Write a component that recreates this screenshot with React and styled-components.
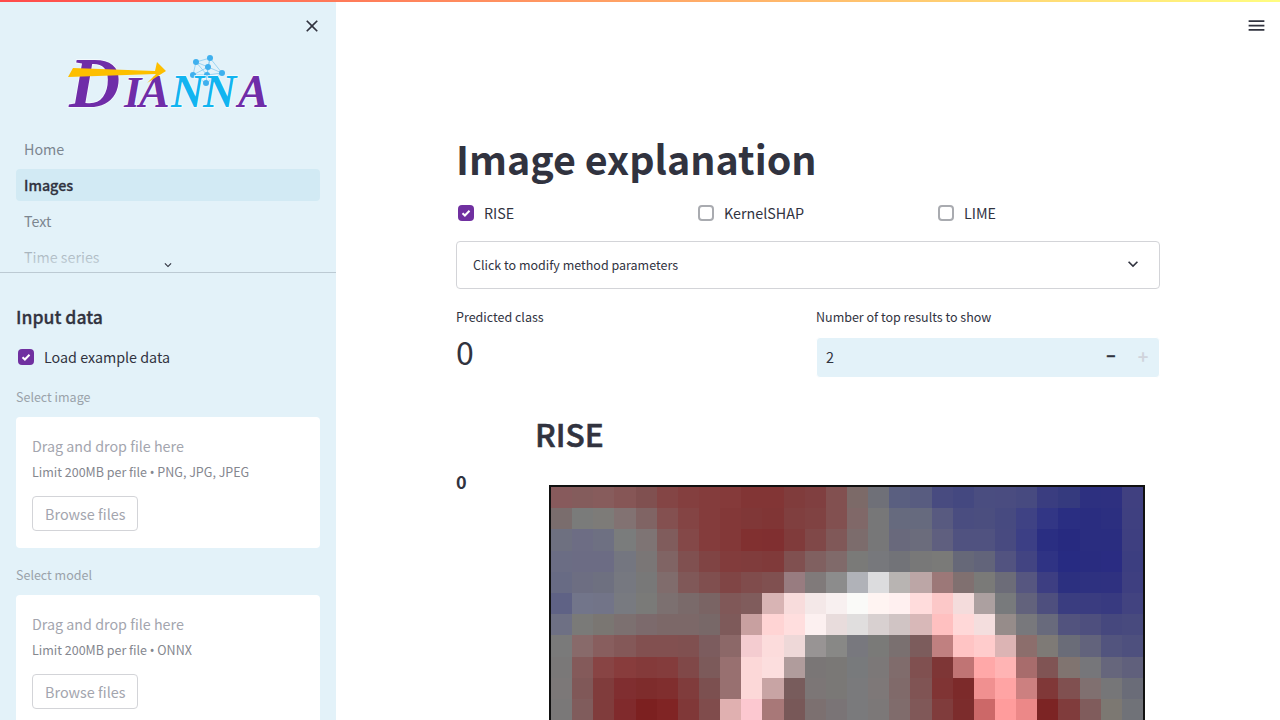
import styled, { createGlobalStyle } from "styled-components";

const heatmap = [
  "875a5c 845c5c 875c5c 865656 805050 844545 843f3f 843c3c 853a3a 823535 823535 803c3c 803f40 825050 7c6a68 6f7078 5a5f80 585c80 484b80 444880 4a4d80 4a4c80 474a80 3a3d80 353a7e 2d3080 2e3080 404080",
  "7a6d6d 7a7b7a 7d7b78 827272 806464 845050 844444 843c3c 833838 803737 803535 803f3f 804242 825050 806868 777778 666a7e 666a7e 585a80 4a4d80 4b4e7f 474a80 3f4284 323685 2a2e82 2a2d80 2c2f80 3f4080",
  "6e7080 6d6d84 6e7082 7a7c7c 7e7474 805c5c 844848 843c3c 833838 813030 802f30 803b3b 804848 805858 7c6c6c 777778 69697c 6b6c7c 5f5f7f 505280 505280 484a80 3c3f85 2a2e82 272a80 2a2d80 2a2d80 3e3f80",
  "6b6d84 6c6c84 6c6c84 747680 7a7676 806464 805050 804444 823c3c 803c3c 803a3a 805050 806060 806a6a 7a7a78 77787c 727378 787878 7a7a78 666878 62647a 525380 424482 2f3384 272b82 292c80 2a2c82 3c3e80",
  "686b84 6d6e82 6e7080 767880 787878 806c6c 805858 804f4f 804545 804c4c 805050 987c80 807a7a 8c8c8c b0b2b8 dcdcde b8b4b2 bca6a6 9c7878 807070 7a7a78 6c6c78 565680 3d3e82 2c3080 2e3180 2f3180 3e3f80",
  "5f6285 72758a 727488 787a80 7a7a78 7c7070 7a6a6a 7a6464 805858 805c5c d8b4b4 f8dcdc f4e8e8 f8f0f0 fafaf8 fff4f2 fff0f0 ffdcdc fcc8c8 f4dcdc aca0a0 787a7c 62627c 4e4f7e 3a3d80 3a3c80 383a80 424380",
  "6e7084 7a7a78 7a7672 7c7070 7c6a6c 7c6868 7c6868 786868 7e5a5a c8a0a0 ffd4d4 ffdede fcf0f0 e8dcdc e0dede d8d0d0 d0c4c4 d8b8b8 ffc0c0 ffd8d8 f4dede 968c8a 78787c 686a7c 52537e 4e4f7e 46487e 484a7e",
  "7a7a7a 886a6a 885e5e 845858 825050 825050 805050 7c5c5e 8c6868 f4ccd0 fcdcdc eed8d8 989494 888886 78787e 7a7a78 7a7070 7c5c5c c08080 ffc4c4 ffcccc dcb4b4 8c6e6c 7e7a76 6a6c78 62637c 52547e 4e507e",
  "7a7878 845a5a 884444 883c3c 843a3a 843c3c 804848 7c5a5a 987070 fcd8d8 fcdede b09c9c 7a7676 7a7876 787a7c 7c7878 806c6c 805050 7e3636 c07474 ffa8a8 ffb4b4 a86c6c 805454 807470 76767a 66667c 60607c",
  "7c7878 805858 803c3c 802e30 7e2c2c 802e2e 803c3c 7c5050 987070 fcd8d8 c8a4a4 785c5c 7c7676 7a7876 7a7a7c 7e7878 806a6a 805454 803434 7c2a2a f09090 ffa4a4 cc8080 803838 805050 807070 767678 6a6c78",
  "7a7878 805c5c 803c3c 802a2c 7c2020 802424 803838 804c4c e0b0b0 fcc8d0 a87878 785858 7c7070 7a7476 7a7a7c 7c7878 806c6c 805858 803c3c 7c2c2c cc6868 ff9c9c ec8888 7c2424 803c3c 805c5c 7c7872 707278",
].map(row => row.split(" "));

const GlobalStyle = createGlobalStyle`
  html, body {
    margin: 0;
    height: 100%;
    overflow: hidden;
    background: #fff;
  }
  body {
    font-family: "Noto Sans CJK SC", "Noto Sans", sans-serif;
    color: #31333f;
  }
  * {
    box-sizing: border-box;
  }
`;

const Page = styled.div`
  display: flex;
  flex-direction: column;
  width: 1280px;
  height: 720px;
  overflow: hidden;
`;

const Decoration = styled.div`
  flex: none;
  height: 2px;
  background: linear-gradient(90deg, #ff4b4b, #fffd80);
`;

const Columns = styled.div`
  flex: 1;
  display: flex;
  min-height: 0;
`;

const Sidebar = styled.aside`
  flex: none;
  width: 336px;
  overflow: hidden;
  background: #e3f2f9;
`;

const SidebarTop = styled.div`
  display: flex;
  justify-content: flex-end;
  height: 48px;
  padding: 14px 14px 0 0;
`;

const IconBox = styled.svg`
  display: block;
  width: ${props => props.$size || 24}px;
  height: ${props => props.$size || 24}px;
  fill: ${props => props.$color || "#31333f"};
`;

const LogoWrap = styled.div`
  height: 83px;
  padding-left: 66px;
`;

const Nav = styled.nav`
  position: relative;
  height: 140px;
  padding: 0 16px;
  border-bottom: 1px solid #bccad3;
  overflow: hidden;
`;

const NavItem = styled.div`
  height: 32px;
  margin: 0 0 4px;
  padding: 0 8px;
  border-radius: 4px;
  font-size: 14.3px;
  line-height: 32px;
  font-weight: ${props => (props.$active ? 500 : 400)};
  -webkit-text-stroke: ${props => (props.$active ? "0.3px #31333f" : "0")};
  color: ${props => (props.$active ? "#31333f" : "#7c8690")};
  background: ${props => (props.$active ? "#d2eaf4" : "transparent")};
`;

const NavFade = styled.div`
  position: absolute;
  left: 0;
  right: 0;
  bottom: 0;
  height: 40px;
  background: linear-gradient(180deg, rgba(227, 242, 249, 0), rgba(227, 242, 249, 0.85));
`;

const NavChevron = styled.div`
  position: absolute;
  left: 161px;
  bottom: 0;
`;

const SidebarBody = styled.div`
  padding: 31px 16px 0;
`;

const SideHeading = styled.h2`
  margin: 0 0 14px;
  font-size: 17.6px;
  line-height: 26px;
  font-weight: 500;
  -webkit-text-stroke: 0.3px #31333f;
  color: #31333f;
`;

const CheckRow = styled.label`
  display: flex;
  align-items: center;
  gap: 10px;
  height: 24px;
  font-size: 14.3px;
  color: #31333f;
`;

const CheckBoxMark = styled.span`
  flex: none;
  display: flex;
  align-items: center;
  justify-content: center;
  width: 16px;
  height: 16px;
  margin: 2px 0 0 2px;
  border-radius: 4px;
  background: ${props => (props.$checked ? "#7030a0" : "#fff")};
  border: ${props => (props.$checked ? "none" : "2px solid #a9abb0")};
`;

const FieldLabel = styled.div`
  margin: ${props => props.$top || 0}px 0 0;
  height: 20px;
  font-size: 12.5px;
  line-height: 20px;
  color: ${props => (props.$muted ? "#9aa2aa" : "#31333f")};
`;

const UploadCard = styled.div`
  height: 131px;
  margin-top: 10px;
  padding: 16px;
  border-radius: 4px;
  background: #fff;
`;

const UploadTitle = styled.div`
  font-size: 14.3px;
  line-height: 26px;
  color: #a3a5ae;
`;

const UploadHint = styled.div`
  margin-top: 2px;
  font-size: 12.5px;
  line-height: 22px;
  color: #85878f;
`;

const Bullet = styled.span`
  font-family: "Noto Sans", sans-serif;
`;

const BrowseButton = styled.button`
  display: block;
  height: 35px;
  margin-top: 12px;
  padding: 0 12px;
  border: 1px solid #d3d4d8;
  border-radius: 4px;
  background: #fff;
  font-family: inherit;
  font-size: 14.4px;
  color: #a3a5ae;
`;

const Main = styled.main`
  position: relative;
  flex: 1;
  min-width: 0;
  overflow: hidden;
  padding: 130px 120px 0;
`;

const MenuButton = styled.div`
  position: absolute;
  top: 12.5px;
  right: 13.5px;
`;

const Title = styled.h1`
  margin: 0;
  height: 52px;
  font-size: 39.4px;
  line-height: 52px;
  font-weight: 700;
  color: #31333f;
`;

const MethodRow = styled.div`
  display: grid;
  grid-template-columns: repeat(3, 240px);
  margin-top: 16px;
`;

const Expander = styled.div`
  display: flex;
  align-items: center;
  justify-content: space-between;
  height: 48px;
  margin-top: 17px;
  padding: 0 16px 2px 16px;
  border: 1px solid #d3d4d8;
  border-radius: 4px;
  font-size: 12.5px;
  color: #31333f;
`;

const MetricRow = styled.div`
  display: grid;
  grid-template-columns: 344px 344px;
  gap: 16px;
  margin-top: 18px;
`;

const MetricValue = styled.div`
  font-size: 32px;
  line-height: 48px;
  color: #31333f;
`;

const NumberInput = styled.div`
  display: flex;
  align-items: center;
  height: 41px;
  margin-top: 10px;
  padding: 0 0 3px 9px;
  border: 1px solid #fff;
  border-radius: 4px;
  background: #e3f2f9;
  font-size: 14.4px;
  color: #31333f;
`;

const NumberValue = styled.span`
  flex: 1;
`;

const StepButton = styled.span`
  width: 32px;
  text-align: center;
  font-size: ${props => (props.$disabled ? 18 : 15)}px;
  line-height: 20px;
  font-weight: 700;
  -webkit-text-stroke: ${props => (props.$disabled ? "0" : "0.5px #31333f")};
  color: ${props => (props.$disabled ? "#d0d4dc" : "#31333f")};
`;

const ResultGrid = styled.div`
  display: grid;
  grid-template-columns: 79px 1fr;
  margin-top: 32px;
`;

const ResultHeading = styled.h2`
  grid-column: 2;
  margin: 0;
  height: 46px;
  font-size: 31.6px;
  line-height: 46px;
  font-weight: 500;
  -webkit-text-stroke: 0.6px #31333f;
  color: #31333f;
`;

const ClassLabel = styled.div`
  padding-top: 11px;
  font-size: 18px;
  line-height: 28px;
  font-weight: 600;
`;

const HeatFrame = styled.div`
  width: 596px;
  height: 300px;
  margin: 29px 0 0 14px;
  border: 2px solid #111;
  overflow: hidden;
`;

const HeatSvg = styled.svg`
  display: block;
  width: 592px;
  height: 233px;
  shape-rendering: crispEdges;
`;

function Logo() {
  const nodes = [[130, 12], [144, 8], [142, 17], [127, 25], [141, 25], [156, 23], [140, 33]];
  const links = [[0, 1], [0, 2], [1, 2], [1, 5], [2, 5], [0, 3], [0, 4], [3, 4], [4, 5], [2, 3], [2, 4], [3, 6], [4, 6], [1, 4], [5, 6]];
  return (
    <svg width="230" height="80" viewBox="0 0 230 80">
      {links.map(([a, b]) => (
        <line
          key={`${a}-${b}`}
          x1={nodes[a][0]}
          y1={nodes[a][1]}
          x2={nodes[b][0]}
          y2={nodes[b][1]}
          stroke="#7cc6ee"
          strokeWidth="0.7"
        />
      ))}
      {nodes.map(([cx, cy]) => (
        <circle key={`${cx}-${cy}`} cx={cx} cy={cy} r="3" fill="#3fb0ee" />
      ))}
      <g
        fontFamily="'Liberation Serif', serif"
        fontStyle="italic"
        fontWeight="700"
        stroke="#f6fcff"
        strokeWidth="1.5"
        paintOrder="stroke"
      >
        <text x="3" y="57" fontSize="71" fill="#6f2da8">D</text>
        <text x="58" y="57" fontSize="45" fill="#6f2da8">I</text>
        <text x="73" y="57" fontSize="46" fill="#6f2da8">A</text>
        <text x="105" y="57" fontSize="46" fill="#12b4f0">N</text>
        <text x="137" y="57" fontSize="46" fill="#12b4f0">N</text>
        <text x="172" y="57" fontSize="46" fill="#6f2da8">A</text>
      </g>
      <polygon points="2,27 7,18 89,21 91,12 100,21 81,33 90,24" fill="#fdbf00" />
    </svg>
  );
}

function Check() {
  return (
    <svg width="12" height="12" viewBox="0 0 12 12">
      <path d="M2.5 6.2l2.4 2.3L9.5 3.8" fill="none" stroke="#fff" strokeWidth="2" />
    </svg>
  );
}

function Chevron({ size }) {
  return (
    <IconBox $size={size} viewBox="0 0 24 24">
      <path d="M16.59 8.59L12 13.17 7.41 8.59 6 10l6 6 6-6z" />
    </IconBox>
  );
}

export default function App() {
  return (
    <Page>
      <GlobalStyle />
      <Decoration />
      <Columns>
        <Sidebar>
          <SidebarTop>
            <IconBox $size={20} viewBox="0 0 24 24">
              <path d="M19 6.41L17.59 5 12 10.59 6.41 5 5 6.41 10.59 12 5 17.59 6.41 19 12 13.41 17.59 19 19 17.59 13.41 12z" />
            </IconBox>
          </SidebarTop>
          <LogoWrap>
            <Logo />
          </LogoWrap>
          <Nav>
            <NavItem>Home</NavItem>
            <NavItem $active>Images</NavItem>
            <NavItem>Text</NavItem>
            <NavItem>Time series</NavItem>
            <NavFade />
            <NavChevron>
              <Chevron size={14} />
            </NavChevron>
          </Nav>
          <SidebarBody>
            <SideHeading>Input data</SideHeading>
            <CheckRow>
              <CheckBoxMark $checked>
                <Check />
              </CheckBoxMark>
              Load example data
            </CheckRow>
            <FieldLabel $muted $top={19}>Select image</FieldLabel>
            <UploadCard>
              <UploadTitle>Drag and drop file here</UploadTitle>
              <UploadHint>Limit 200MB per file <Bullet>•</Bullet> PNG, JPG, JPEG</UploadHint>
              <BrowseButton>Browse files</BrowseButton>
            </UploadCard>
            <FieldLabel $muted $top={17}>Select model</FieldLabel>
            <UploadCard>
              <UploadTitle>Drag and drop file here</UploadTitle>
              <UploadHint>Limit 200MB per file <Bullet>•</Bullet> ONNX</UploadHint>
              <BrowseButton>Browse files</BrowseButton>
            </UploadCard>
          </SidebarBody>
        </Sidebar>
        <Main>
          <MenuButton>
            <IconBox $size={21} viewBox="0 0 24 24">
              <path d="M3 18h18v-2H3v2zm0-5h18v-2H3v2zm0-7v2h18V6H3z" />
            </IconBox>
          </MenuButton>
          <Title>Image explanation</Title>
          <MethodRow>
            <CheckRow>
              <CheckBoxMark $checked>
                <Check />
              </CheckBoxMark>
              RISE
            </CheckRow>
            <CheckRow>
              <CheckBoxMark />
              KernelSHAP
            </CheckRow>
            <CheckRow>
              <CheckBoxMark />
              LIME
            </CheckRow>
          </MethodRow>
          <Expander>
            Click to modify method parameters
            <Chevron size={20} />
          </Expander>
          <MetricRow>
            <div>
              <FieldLabel>Predicted class</FieldLabel>
              <MetricValue>0</MetricValue>
            </div>
            <div>
              <FieldLabel>Number of top results to show</FieldLabel>
              <NumberInput>
                <NumberValue>2</NumberValue>
                <StepButton>−</StepButton>
                <StepButton $disabled>+</StepButton>
              </NumberInput>
            </div>
          </MetricRow>
          <ResultGrid>
            <ResultHeading>RISE</ResultHeading>
            <ClassLabel>0</ClassLabel>
            <HeatFrame>
              <HeatSvg viewBox="0 0 592 233">
                {heatmap.map((row, y) =>
                  row.map((color, x) => (
                    <rect
                      key={`${x}-${y}`}
                      x={x * (592 / 28)}
                      y={y * 21.2}
                      width={592 / 28 + 0.5}
                      height="21.7"
                      fill={`#${color}`}
                    />
                  ))
                )}
              </HeatSvg>
            </HeatFrame>
          </ResultGrid>
        </Main>
      </Columns>
    </Page>
  );
}
